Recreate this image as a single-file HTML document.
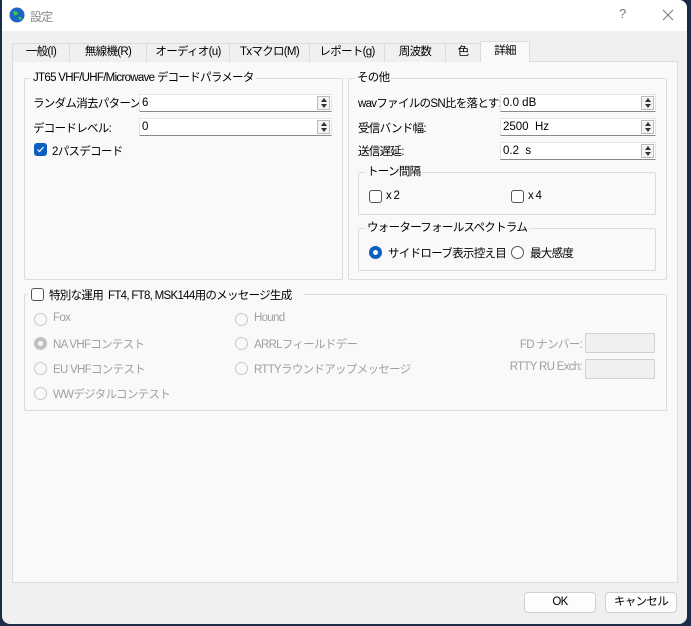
<!DOCTYPE html><html><head><meta charset="utf-8"><style>
*{box-sizing:border-box;margin:0;padding:0}
body{width:691px;height:626px;background:#1c2b4a;position:relative;overflow:hidden;font-family:"Liberation Sans","Noto Sans CJK JP",sans-serif;font-size:11.5px;letter-spacing:-0.7px;color:#000}
.win{position:absolute;left:2px;top:0;width:685px;height:624px;background:#f0f0f0;border-radius:0 8px 8px 8px;overflow:hidden}
.title{position:absolute;left:0;top:0;width:100%;height:31px;background:#fff}
.a{position:absolute;white-space:nowrap}
.pane{position:absolute;left:10px;top:61px;width:666px;height:522px;background:#f9f9f9;border:1px solid #dcdcdc}
.tab{position:absolute;top:43px;height:19px;border:1px solid #dcdcdc;border-bottom:none;background:#f0f0f0;text-align:center;line-height:17px}
.grp{position:absolute;border:1px solid #dcdcdc;border-radius:2px}
.gt{position:absolute;background:#f9f9f9;padding:0 2px;line-height:14px;top:-8px;left:6px;white-space:nowrap}
.spin{position:absolute;height:18px;background:#fff;border:1px solid #e4e4e4;border-bottom:1px solid #8a8a8a;padding-left:2px;line-height:16px;letter-spacing:0}
.spin i{position:absolute;right:1px;top:1px;width:13px;height:14px;border:1px solid #bbb;background:#f4f4f4}
.spin i:before{content:"";position:absolute;left:3px;top:1px;border:3px solid transparent;border-bottom:4px solid #333;border-top:none}
.spin i:after{content:"";position:absolute;left:3px;top:7px;border:3px solid transparent;border-top:4px solid #333;border-bottom:none}
.cb{position:absolute;width:13px;height:13px;border:1px solid #555;border-radius:3px;background:#fff}
.rb{position:absolute;width:13px;height:13px;border:1px solid #555;border-radius:50%;background:#fff}
.dis{color:#a0a0a0}
.rb.d{border-color:#c8c8c8;background:#f9f9f9}
.box{position:absolute;width:70px;height:20px;border:1px solid #d0d0d0;background:#f0f0f0;border-radius:2px}
.btn{position:absolute;top:592px;width:72px;height:21px;border:1px solid #d0d0d0;border-radius:4px;background:#fdfdfd;text-align:center;line-height:19px}
</style></head><body>
<div class="win">
<div class="title">
<svg class="a" style="left:7px;top:7px" width="16" height="16"><circle cx="8" cy="8" r="7.5" fill="#1e63c6"/><path d="M4 5 Q7 3 9 6 Q8 9 5 8Z M9 10 Q12 9 13 12 Q10 14 9 10Z" fill="#3ecb3e"/></svg>
<div class="a" style="left:28px;top:8px;color:#888;font-size:12px">設定</div>
<div class="a" style="left:617px;top:6px;color:#777;font-size:13px">?</div>
<svg class="a" style="left:660px;top:9px" width="12" height="12"><path d="M1 1L11 11M11 1L1 11" stroke="#777" stroke-width="1"/></svg>
</div>
<div class="pane"></div>
<div class="tab" style="left:10px;width:58px">一般(I)</div>
<div class="tab" style="left:67px;width:78px">無線機(R)</div>
<div class="tab" style="left:144px;width:84px">オーディオ(u)</div>
<div class="tab" style="left:227px;width:81px">Txマクロ(M)</div>
<div class="tab" style="left:307px;width:76px">レポート(g)</div>
<div class="tab" style="left:382px;width:62px">周波数</div>
<div class="tab" style="left:443px;width:36px">色</div>
<div class="tab" style="left:478px;top:41px;height:21px;width:50px;background:#f9f9f9;z-index:2;line-height:19px">詳細</div>

<div class="grp" style="left:22px;top:78px;width:319px;height:202px"><div class="gt">JT65 VHF/UHF/Microwave デコードパラメータ</div></div>
<div class="a" style="left:31px;top:95px">ランダム消去パターン:</div>
<div class="spin" style="left:137px;top:94px;width:193px">6<i></i></div>
<div class="a" style="left:31px;top:120px">デコードレベル:</div>
<div class="spin" style="left:137px;top:118px;width:193px">0<i></i></div>
<div class="cb" style="left:32px;top:143px;background:#0a5fc0;border-color:#0a5fc0"><svg width="11" height="11" style="position:absolute;left:0;top:0"><path d="M2.5 5.5L4.5 7.5L8.5 3" stroke="#fff" stroke-width="1.2" fill="none"/></svg></div>
<div class="a" style="left:50px;top:143px">2パスデコード</div>

<div class="grp" style="left:346px;top:78px;width:319px;height:202px"><div class="gt">その他</div></div>
<div class="a" style="left:356px;top:95px">wavファイルのSN比を落とす:</div>
<div class="spin" style="left:498px;top:94px;width:156px">0.0 dB<i></i></div>
<div class="a" style="left:356px;top:120px">受信バンド幅:</div>
<div class="spin" style="left:498px;top:118px;width:156px">2500&nbsp; Hz<i></i></div>
<div class="a" style="left:356px;top:143px">送信遅延:</div>
<div class="spin" style="left:498px;top:142px;width:156px">0.2&nbsp; s<i></i></div>
<div class="grp" style="left:356px;top:172px;width:298px;height:43px"><div class="gt">トーン間隔</div></div>
<div class="cb" style="left:367px;top:190px"></div><div class="a" style="left:384px;top:190px">x 2</div>
<div class="cb" style="left:509px;top:190px"></div><div class="a" style="left:526px;top:190px">x 4</div>
<div class="grp" style="left:356px;top:228px;width:298px;height:43px"><div class="gt">ウォーターフォールスペクトラム</div></div>
<div class="rb" style="left:367px;top:246px;border:4px solid #0a5fc0"></div><div class="a" style="left:386px;top:245px">サイドローブ表示控え目</div>
<div class="rb" style="left:509px;top:246px"></div><div class="a" style="left:528px;top:245px">最大感度</div>

<div class="grp" style="left:22px;top:294px;width:643px;height:117px"></div>
<div class="a" style="left:26px;top:287px;background:#f9f9f9;width:276px;height:14px"></div>
<div class="cb" style="left:29px;top:288px"></div>
<div class="a" style="left:47px;top:287px">特別な運用&nbsp; FT4, FT8, MSK144用のメッセージ生成</div>
<div class="rb d" style="left:32px;top:313px"></div><div class="a dis" style="left:51px;top:312px">Fox</div>
<div class="rb d" style="left:32px;top:337px;border:4px solid #c0c0c0"></div><div class="a dis" style="left:51px;top:336px">NA VHFコンテスト</div>
<div class="rb d" style="left:32px;top:362px"></div><div class="a dis" style="left:51px;top:361px">EU VHFコンテスト</div>
<div class="rb d" style="left:32px;top:387px"></div><div class="a dis" style="left:51px;top:386px">WWデジタルコンテスト</div>
<div class="rb d" style="left:233px;top:313px"></div><div class="a dis" style="left:252px;top:312px">Hound</div>
<div class="rb d" style="left:233px;top:337px"></div><div class="a dis" style="left:252px;top:336px">ARRLフィールドデー</div>
<div class="rb d" style="left:233px;top:362px"></div><div class="a dis" style="left:252px;top:361px">RTTYラウンドアップメッセージ</div>
<div class="a dis" style="right:105px;top:336px">FD ナンバー:</div>
<div class="box" style="left:583px;top:333px"></div>
<div class="a dis" style="right:105px;top:361px">RTTY RU Exch:</div>
<div class="box" style="left:583px;top:359px"></div>

<div class="btn" style="left:522px">OK</div>
<div class="btn" style="left:603px">キャンセル</div>
</div>
</body></html>
